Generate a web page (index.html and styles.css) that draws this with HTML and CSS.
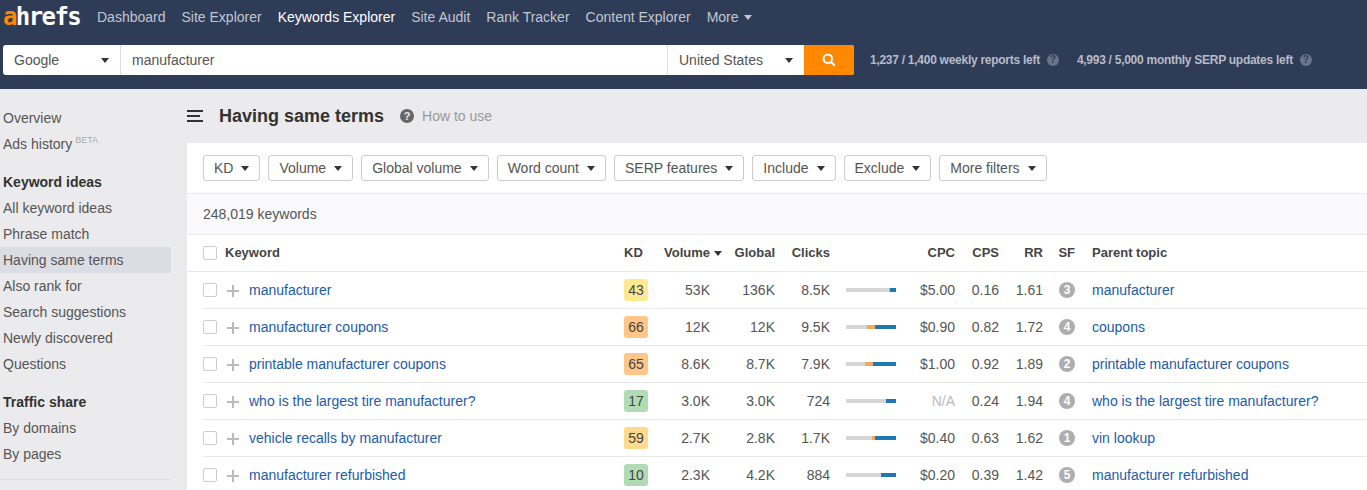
FILE: index.html
```html
<!DOCTYPE html>
<html lang="en">
<head>
<meta charset="utf-8">
<title>Ahrefs Keywords Explorer</title>
<link rel="stylesheet" href="styles.css">
</head>
<body>
<header class="top">
  <nav class="nav">
    <span class="logo"><span class="logo-a">a</span>hrefs</span>
    <a class="nav-link">Dashboard</a>
    <a class="nav-link">Site Explorer</a>
    <a class="nav-link active">Keywords Explorer</a>
    <a class="nav-link">Site Audit</a>
    <a class="nav-link">Rank Tracker</a>
    <a class="nav-link">Content Explorer</a>
    <a class="nav-link more">More <i class="caret caret-light"></i></a>
  </nav>
  <div class="searchbar">
    <div class="search-box">
      <div class="sel sel-engine"><span>Google</span><i class="caret caret-dark"></i></div>
      <div class="query">manufacturer</div>
      <div class="sel sel-country"><span>United States</span><i class="caret caret-dark"></i></div>
      <div class="go">
        <svg width="14" height="14" viewBox="0 0 14 14" fill="none" stroke="#fff" stroke-width="2"><circle cx="5.8" cy="5.8" r="4.2"/><path d="M8.8 8.8l4 4"/></svg>
      </div>
    </div>
    <div class="stat">1,237 / 1,400 weekly reports left <i class="q q-dark">?</i></div>
    <div class="stat">4,993 / 5,000 monthly SERP updates left <i class="q q-dark">?</i></div>
  </div>
</header>
<div class="layout">
  <aside class="side">
    <a class="side-item">Overview</a>
    <a class="side-item">Ads history <sup class="beta">BETA</sup></a>
    <div class="side-head">Keyword ideas</div>
    <a class="side-item">All keyword ideas</a>
    <a class="side-item">Phrase match</a>
    <a class="side-item current">Having same terms</a>
    <a class="side-item">Also rank for</a>
    <a class="side-item">Search suggestions</a>
    <a class="side-item">Newly discovered</a>
    <a class="side-item">Questions</a>
    <div class="side-head">Traffic share</div>
    <a class="side-item">By domains</a>
    <a class="side-item">By pages</a>
    <div class="side-rule"></div>
  </aside>
  <main class="main">
    <div class="title-row">
      <svg class="burger" width="17" height="13" viewBox="0 0 17 13" fill="#333"><rect y="0" width="16" height="2"/><rect y="5" width="13" height="2"/><rect y="10" width="16" height="2"/></svg>
      <h1 class="title">Having same terms</h1>
      <i class="q q-light">?</i>
      <span class="howto">How to use</span>
    </div>
    <section class="panel">
      <div class="filters">
        <button class="fbtn">KD <i class="caret caret-dark"></i></button>
        <button class="fbtn">Volume <i class="caret caret-dark"></i></button>
        <button class="fbtn">Global volume <i class="caret caret-dark"></i></button>
        <button class="fbtn">Word count <i class="caret caret-dark"></i></button>
        <button class="fbtn">SERP features <i class="caret caret-dark"></i></button>
        <button class="fbtn">Include <i class="caret caret-dark"></i></button>
        <button class="fbtn">Exclude <i class="caret caret-dark"></i></button>
        <button class="fbtn">More filters <i class="caret caret-dark"></i></button>
      </div>
      <div class="count">248,019 keywords</div>
      <div class="row head">
        <div class="c-check"><i class="box"></i><span class="kw-head">Keyword</span></div>
        <div></div>
        <div>KD</div>
        <div class="r vol-head">Volume<i class="caret caret-dark sort"></i></div>
        <div class="r">Global</div>
        <div class="r">Clicks</div>
        <div></div>
        <div class="r">CPC</div>
        <div class="r">CPS</div>
        <div class="r">RR</div>
        <div class="r">SF</div>
        <div class="parent-h">Parent topic</div>
      </div>
      <div class="row">
        <div class="c-check"><i class="box"></i><i class="plus"></i></div>
        <a class="link">manufacturer</a>
        <div class="kd kd-yellow">43</div>
        <div class="r">53K</div><div class="r">136K</div><div class="r">8.5K</div>
        <div class="bar"><i class="b-gray" style="width:43px"></i><i class="b-org" style="width:1px"></i><i class="b-blue" style="width:6px"></i></div>
        <div class="r">$5.00</div><div class="r">0.16</div><div class="r">1.61</div>
        <div class="sf-cell"><b class="sf">3</b></div>
        <a class="link parent">manufacturer</a>
      </div>
      <div class="row">
        <div class="c-check"><i class="box"></i><i class="plus"></i></div>
        <a class="link">manufacturer coupons</a>
        <div class="kd kd-orange">66</div>
        <div class="r">12K</div><div class="r">12K</div><div class="r">9.5K</div>
        <div class="bar"><i class="b-gray" style="width:21px"></i><i class="b-org" style="width:8px"></i><i class="b-blue" style="width:21px"></i></div>
        <div class="r">$0.90</div><div class="r">0.82</div><div class="r">1.72</div>
        <div class="sf-cell"><b class="sf">4</b></div>
        <a class="link parent">coupons</a>
      </div>
      <div class="row">
        <div class="c-check"><i class="box"></i><i class="plus"></i></div>
        <a class="link">printable manufacturer coupons</a>
        <div class="kd kd-orange">65</div>
        <div class="r">8.6K</div><div class="r">8.7K</div><div class="r">7.9K</div>
        <div class="bar"><i class="b-gray" style="width:19px"></i><i class="b-org" style="width:8px"></i><i class="b-blue" style="width:23px"></i></div>
        <div class="r">$1.00</div><div class="r">0.92</div><div class="r">1.89</div>
        <div class="sf-cell"><b class="sf">2</b></div>
        <a class="link parent">printable manufacturer coupons</a>
      </div>
      <div class="row">
        <div class="c-check"><i class="box"></i><i class="plus"></i></div>
        <a class="link">who is the largest tire manufacturer?</a>
        <div class="kd kd-green">17</div>
        <div class="r">3.0K</div><div class="r">3.0K</div><div class="r">724</div>
        <div class="bar"><i class="b-gray" style="width:40px"></i><i class="b-blue" style="width:10px"></i></div>
        <div class="r na">N/A</div><div class="r">0.24</div><div class="r">1.94</div>
        <div class="sf-cell"><b class="sf">4</b></div>
        <a class="link parent">who is the largest tire manufacturer?</a>
      </div>
      <div class="row">
        <div class="c-check"><i class="box"></i><i class="plus"></i></div>
        <a class="link">vehicle recalls by manufacturer</a>
        <div class="kd kd-yellow2">59</div>
        <div class="r">2.7K</div><div class="r">2.8K</div><div class="r">1.7K</div>
        <div class="bar"><i class="b-gray" style="width:26px"></i><i class="b-org" style="width:3px"></i><i class="b-blue" style="width:21px"></i></div>
        <div class="r">$0.40</div><div class="r">0.63</div><div class="r">1.62</div>
        <div class="sf-cell"><b class="sf">1</b></div>
        <a class="link parent">vin lookup</a>
      </div>
      <div class="row">
        <div class="c-check"><i class="box"></i><i class="plus"></i></div>
        <a class="link">manufacturer refurbished</a>
        <div class="kd kd-green">10</div>
        <div class="r">2.3K</div><div class="r">4.2K</div><div class="r">884</div>
        <div class="bar"><i class="b-gray" style="width:35px"></i><i class="b-blue" style="width:15px"></i></div>
        <div class="r">$0.20</div><div class="r">0.39</div><div class="r">1.42</div>
        <div class="sf-cell"><b class="sf">5</b></div>
        <a class="link parent">manufacturer refurbished</a>
      </div>
    </section>
  </main>
</div>
</body>
</html>
```
FILE: styles.css
```css
* { box-sizing: border-box; }
html, body { margin: 0; height: 490px; overflow: hidden; }
body { font: 14px/20px "Liberation Sans", Arial, sans-serif; color: #444; background: #ebebed; }
i { font-style: normal; }

.top { height: 89px; background: #2f3c58; }
.nav { height: 45px; display: flex; align-items: flex-start; padding: 7px 0 0 3px; }
.logo { width: 78px; margin-right: 16px; font: bold 24px/20px "DejaVu Sans Mono", monospace; letter-spacing: -1.6px; color: #fff; }
.logo-a { color: #ff8800; }
.nav-link { margin-right: 16px; color: #c2c6cf; }
.nav-link.active { color: #fff; }
.more { display: flex; align-items: center; gap: 5px; }

.caret { display: inline-block; flex: none; width: 0; height: 0; border-left: 4px solid transparent; border-right: 4px solid transparent; border-top: 5px solid #333; vertical-align: 2px; }
.caret-light { border-top-color: #c2c6cf; }

.searchbar { display: flex; align-items: center; padding-left: 3px; }
.search-box { display: flex; height: 30px; width: 851px; margin-right: 16px; background: #fff; border-radius: 3px; line-height: 30px; color: #555; }
.sel { display: flex; align-items: center; justify-content: space-between; padding: 0 11px; flex: none; }
.sel-engine { width: 118px; border-right: 1px solid #ddd; }
.query { flex: 1; padding-left: 11px; }
.sel-country { width: 137px; border-left: 1px solid #ddd; }
.go { width: 50px; flex: none; background: #ff8800; border-radius: 0 3px 3px 0; display: flex; align-items: center; justify-content: center; }
.stat { font-size: 12px; font-weight: bold; color: #b6bbc6; margin-right: 18px; letter-spacing: -0.27px; white-space: nowrap; display: flex; align-items: center; gap: 7px; }

.q { display: inline-flex; width: 12px; height: 12px; border-radius: 50%; align-items: center; justify-content: center; font-size: 10px; line-height: 12px; font-weight: bold; letter-spacing: 0; }
.q-dark { background: #6b7488; color: #2f3c58; }
.q-light { width: 14px; height: 14px; background: #666; color: #ebebed; font-size: 11px; }

.layout { display: flex; align-items: flex-start; }
.side { width: 187px; flex: none; padding-top: 16px; }
.side-item { display: block; width: 171px; height: 26px; line-height: 26px; padding-left: 3px; color: #555; white-space: nowrap; }
.side-item.current { background: #dcdce4; }
.side-head { width: 171px; height: 26px; line-height: 26px; margin-top: 12px; padding-left: 3px; font-weight: bold; color: #333; }
.beta { font-size: 9px; line-height: 0; color: #aaa; vertical-align: 6px; margin-left: -1px; }
.side-rule { width: 171px; height: 1px; margin-top: 12px; background: #ddd; }

.main { flex: 1; min-width: 0; }
.title-row { height: 54px; display: flex; align-items: center; }
.burger { margin-right: 15px; }
.title { margin: 0 16px 0 0; font-size: 18px; line-height: 24px; font-weight: bold; color: #333; }
.howto { margin-left: 8px; color: #999; }

.panel { background: #fff; }
.filters { height: 51px; padding: 12px 16px 0; display: flex; gap: 8px; border-bottom: 1px solid #e8e8e8; }
.fbtn { height: 26px; padding: 0 10px; border: 1px solid #ccc; border-radius: 3px; background: #fff; font: inherit; color: #555; display: flex; align-items: center; gap: 8px; white-space: nowrap; }
.count { height: 41px; padding: 0 16px; line-height: 40px; background: #fafafc; border-bottom: 1px solid #e8e8e8; color: #555; }

.row { height: 37px; margin-left: 16px; display: grid; align-items: center; grid-template-columns: 46px 375px 24px 62px 65px 55px 66px 59px 44px 44px 32px 1fr; border-bottom: 1px solid #e8e8e8; color: #555; }
.row.head { margin-left: 0; padding-left: 16px; font-size: 13px; font-weight: bold; color: #444; }
.kw-head { flex: none; margin-left: -2px; white-space: nowrap; }
.r { text-align: right; }
.vol-head { position: relative; }
.sort { position: absolute; left: 100%; top: 8px; margin-left: 4px; }
.parent-h, .parent { margin-left: 17px; }
.c-check { display: flex; align-items: center; gap: 10px; }
.box { flex: none; width: 14px; height: 14px; border: 1px solid #ccc; border-radius: 2px; background: #fff; }
.plus { flex: none; width: 12px; height: 12px; background: linear-gradient(#bbb, #bbb) center / 100% 2px no-repeat, linear-gradient(#bbb, #bbb) center / 2px 100% no-repeat; margin-top: 1px; }
.link { color: #1b5bab; white-space: nowrap; }
.kd { width: 24px; height: 22px; line-height: 22px; text-align: center; border-radius: 3px; color: #444; }
.kd-yellow { background: #fde992; }
.kd-yellow2 { background: #ffd98c; }
.kd-orange { background: #ffc687; }
.kd-green { background: #b1dbb4; }
.bar { display: flex; justify-content: flex-end; height: 4px; }
.bar i { display: block; }
.b-gray { background: #d6d6d6; }
.b-org { background: #f6a75c; }
.b-blue { background: #1f78b4; }
.na { color: #bbb; }
.sf-cell { display: flex; justify-content: flex-end; }
.sf { width: 16px; height: 16px; line-height: 16px; border-radius: 50%; background: #aeaeae; color: #fff; font-size: 12px; text-align: center; }
```
